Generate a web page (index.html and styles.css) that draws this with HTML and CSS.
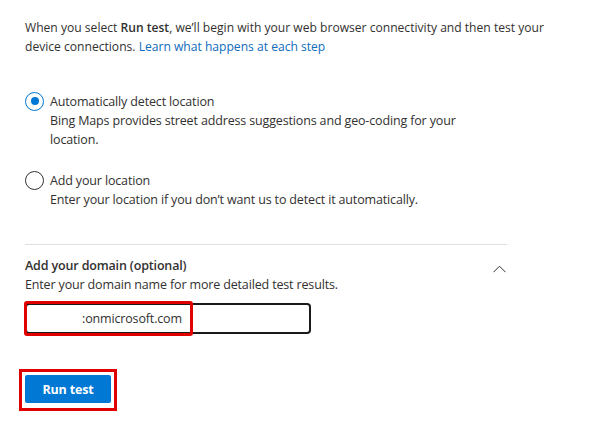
FILE: index.html
```html
<!DOCTYPE html>
<html lang="en">
<head>
<meta charset="utf-8">
<title>Run test</title>
<link rel="stylesheet" href="styles.css">
</head>
<body>
<main class="page">
  <p class="intro">When you select <strong>Run test</strong>, we’ll begin with your web browser connectivity and then test your device connections. <a class="link" href="#">Learn what happens at each step</a></p>

  <div class="radios">
    <label class="option">
      <span class="radio checked"><span class="dot"></span></span>
      <span class="option-text">
        <span class="option-title">Automatically detect location</span>
        <span class="option-desc">Bing Maps provides street address suggestions and geo-coding for your location.</span>
      </span>
    </label>
    <label class="option">
      <span class="radio"></span>
      <span class="option-text">
        <span class="option-title">Add your location</span>
        <span class="option-desc">Enter your location if you don’t want us to detect it automatically.</span>
      </span>
    </label>
  </div>

  <section class="domain">
    <div class="domain-head">
      <h2 class="domain-title">Add your domain (optional)</h2>
      <svg class="chevron" width="13" height="8" viewBox="0 0 13 8"><path d="M0.5 7.2 L6.5 1.2 L12.5 7.2" fill="none" stroke="#323130" stroke-width="1"/></svg>
    </div>
    <p class="domain-desc">Enter your domain name for more detailed test results.</p>
    <div class="field">
      <div class="input"><span class="value">:onmicrosoft.com</span></div>
      <span class="highlight-input"></span>
    </div>
  </section>

  <div class="btn-wrap">
    <button class="btn" type="button">Run test</button>
  </div>
</main>
</body>
</html>
```

FILE: styles.css
```css
* { box-sizing: border-box; }
html, body { margin: 0; padding: 0; background: #fff; }
body {
  font-family: "Open Sans", "Noto Sans", sans-serif;
  font-size: 12.5px;
  line-height: 19px;
  color: #323130;
  letter-spacing: -0.15px;
}
.page {
  padding: 18px 0 0 25px;
  width: 597px;
  display: flex;
  flex-direction: column;
  align-items: flex-start;
}
.intro { margin: 0; width: 530px; font-size: 12.1px; letter-spacing: 0; }
.intro strong { font-weight: 600; }
.link { color: #0f6cbd; text-decoration: none; }

.radios {
  margin-top: 35.5px;
  display: flex;
  flex-direction: column;
  gap: 22px;
  width: 450px;
}
.option { display: flex; gap: 6px; align-items: flex-start; }
.radio {
  width: 19px; height: 19px;
  border: 1.5px solid #323130;
  border-radius: 50%;
  display: flex; align-items: center; justify-content: center;
  flex: none;
}
.radio.checked { border-color: #0078d4; }
.dot { width: 8px; height: 8px; border-radius: 50%; background: #0078d4; }
.option-text { display: flex; flex-direction: column; }

.domain {
  margin-top: 35px;
  width: 482px;
  border-top: 1px solid #e1dfdd;
  padding-top: 11.5px;
}
.domain-head { display: flex; justify-content: space-between; align-items: center; }
.domain-title { margin: 0; font-size: 12.5px; line-height: 19px; font-weight: 600; }
.chevron { margin-top: 6px; margin-right: 1px; }
.domain-desc { margin: 0; }
.field { position: relative; margin-top: 8.5px; width: 286px; }
.input {
  height: 31px;
  border: 2px solid #1b1a19;
  border-radius: 4px;
  display: flex; align-items: center;
  padding-left: 55px;
}
.highlight-input {
  position: absolute;
  left: -1px; top: -2px;
  width: 169px; height: 35px;
  border: 3px solid #e00000;
  border-radius: 3px;
}

.btn-wrap {
  margin-top: 35px;
  margin-left: -6px;
  border: 3px solid #e00000;
  padding: 3px 3px 5px 3px;
}
.btn {
  display: block;
  width: 86px; height: 28px;
  background: #0078d4;
  color: #fff;
  border: none;
  border-radius: 2px;
  font-family: inherit;
  font-size: 12.5px;
  font-weight: 700;
  letter-spacing: -0.15px;
  padding: 0 0 0 0;
  line-height: 30px;
}
```
